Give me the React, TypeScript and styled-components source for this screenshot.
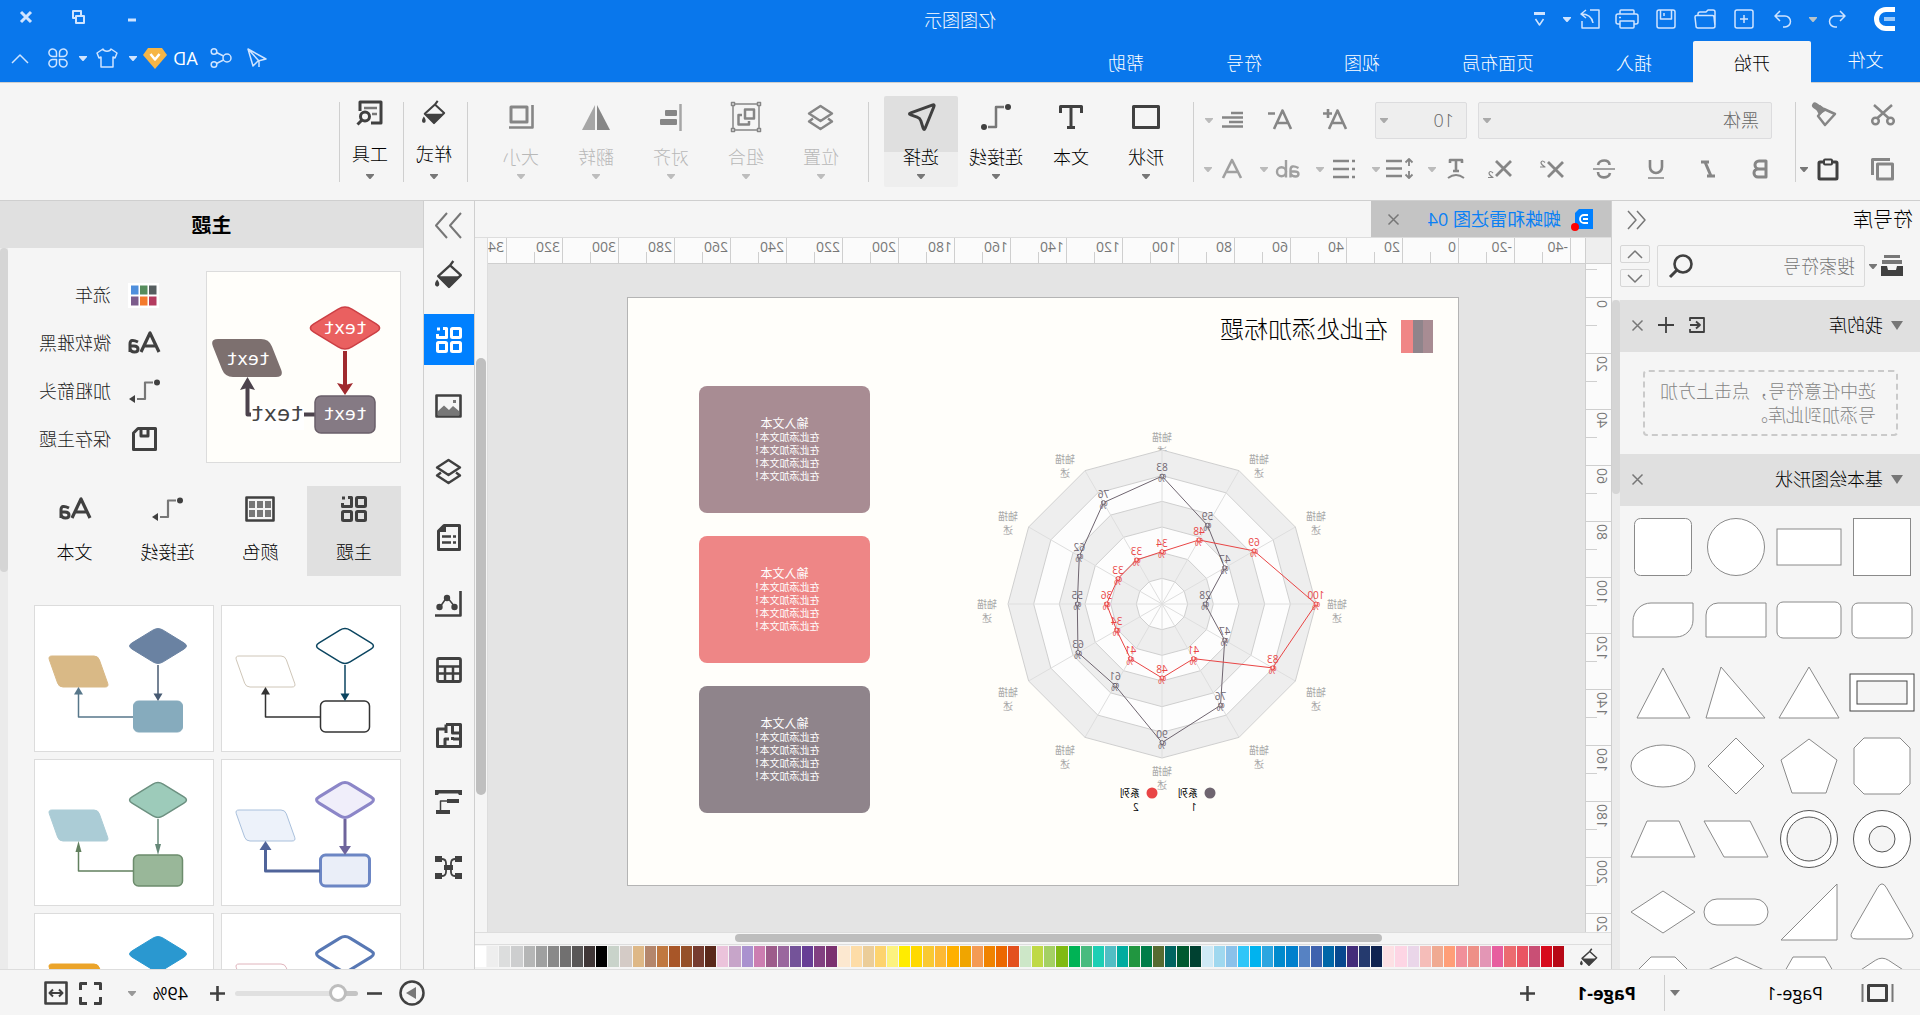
import React from "react";
import styled, { createGlobalStyle } from "styled-components";

const C = {
  blue: "#0977ec",
  accent: "#0080ff",
  panel: "#f5f5f5",
  head: "#e0e0e0",
  line: "#cfcfcf",
  soft: "#dddddd",
  dark: "#404040",
  mid: "#777777",
  off: "#868686",
  canvas: "#e4e4e4",
  paper: "#fffefa",
};

const sans = `"Open Sans", "Noto Sans CJK SC", "Noto Sans", sans-serif`;

const GlobalStyle = createGlobalStyle`
  * { box-sizing: border-box; }
  body { margin: 0; background: ${C.panel}; }
  button, input, select { font: inherit; color: inherit; }
  button { border: 0; padding: 0; margin: 0; background: transparent; }
  h2, h3, p { margin: 0; font: inherit; }
`;

const Window = styled.div`
  display: flex;
  flex-direction: column;
  height: 100vh;
  overflow: hidden;
  background: ${C.panel};
  color: #000;
  font-family: ${sans};
  font-size: 18px;
  font-weight: 300;
  line-height: 24px;
  transform: scaleX(-1);
`;

/* ---------- icon helpers ---------- */

const Svg = styled.svg<{ $c?: string; $sw?: number }>`
  display: block;
  flex: none;
  color: ${(p) => p.$c || C.dark};
  fill: none;
  stroke: currentColor;
  stroke-width: ${(p) => p.$sw || 2};
  stroke-linejoin: round;
  overflow: visible;
  .f { fill: currentColor; stroke: none; }
  .m { stroke: ${C.mid}; }
  .mf { fill: ${C.mid}; stroke: none; }
`;

type IconProps = { s?: number; w?: number; c?: string; sw?: number; children: React.ReactNode };
const Icon = ({ s = 24, w, c, sw, children }: IconProps) => (
  <Svg $c={c} $sw={sw} width={w || s} height={s} viewBox={`0 0 ${w || s} ${s}`} aria-hidden="true">
    {children}
  </Svg>
);

const Caret = ({ c = C.mid }: { c?: string }) => (
  <Icon s={5} w={8} c={c}>
    <path className="f" d="M0 0H8V1L4.500 5H3.500L0 1z" />
  </Icon>
);

type Pt = [number, number];
const roundPoly = (pts: Pt[], r: number) => {
  const n = pts.length;
  return (
    pts
      .map((p, i) => {
        const a = pts[(i + n - 1) % n];
        const b = pts[(i + 1) % n];
        const toward = (q: Pt) => {
          const d = Math.hypot(q[0] - p[0], q[1] - p[1]);
          return `${p[0] + ((q[0] - p[0]) * r) / d} ${p[1] + ((q[1] - p[1]) * r) / d}`;
        };
        return `${i ? "L" : "M"}${toward(a)}Q${p[0]} ${p[1]} ${toward(b)}`;
      })
      .join("") + "Z"
  );
};

/* ---------- header ---------- */

const Header = styled.header`
  flex: none;
  background: ${C.blue};
  color: #fff;
  border-bottom: 1px solid ${C.line};
`;

const TitleRow = styled.div`
  display: grid;
  grid-template-columns: 1fr auto 1fr;
  height: 41px;
`;

const QuickBar = styled.div`
  display: flex;
  align-items: center;
  height: 38px;
  padding-left: 25px;
`;

const Slot = styled.button<{ $w: number; $gap?: number }>`
  display: flex;
  align-items: center;
  justify-content: center;
  flex: none;
  width: ${(p) => p.$w}px;
  height: 32px;
  margin-left: ${(p) => p.$gap || 0}px;
`;

const Account = styled(Slot)`
  font-weight: 400;
`;

const AppTitle = styled.div`
  padding-top: 8px;
`;

const WindowButtons = styled.div`
  display: flex;
  justify-content: flex-end;
  align-items: center;
  height: 34px;
`;

const MenuRow = styled.div`
  display: flex;
  height: 41px;
`;

const FileTab = styled.button`
  width: 109px;
  height: 38px;
`;

const MenuTab = styled.button<{ $on?: boolean }>`
  padding: 2px 41px 0;
  height: 41px;
  border-radius: 2px 2px 0 0;
  background: ${(p) => (p.$on ? C.panel : "transparent")};
  color: ${(p) => (p.$on ? "#000" : "#fff")};
  box-shadow: ${(p) => (p.$on ? `0 1px 0 ${C.panel}` : "none")};
`;

const MenuActions = styled.div`
  display: flex;
  align-items: center;
  height: 34px;
  margin-left: auto;
`;

const LT = "#cfe4ff";

const Head = () => (
  <Header>
    <TitleRow>
      <QuickBar>
        <Icon s={24} c="#fff" sw={5}>
          <path d="M0 2.500H9a9.500 9.500 0 0 1 0 19H0" />
          <path d="M0 12H11" stroke="#9dcaf9" strokeWidth="4" />
        </Icon>
        <Slot $w={28} $gap={20} aria-label="撤销">
          <Icon s={18} c={LT} sw={1.5}><path d="M6 1L1 6L6 11M1 6H11a5.500 5.500 0 0 1 0 11H9" /></Icon>
        </Slot>
        <Slot $w={20} aria-label="撤销记录"><Caret c="#b9c4c9" /></Slot>
        <Slot $w={39} aria-label="重做">
          <Icon s={18} c={LT} sw={1.5}><path d="M12 1L17 6L12 11M17 6H7a5.500 5.500 0 0 0 0 11H9" /></Icon>
        </Slot>
        <Slot $w={39} aria-label="新建">
          <Icon s={20} c={LT} sw={1.5}><rect x="1" y="1" width="18" height="18" rx="2" /><path d="M10 6V14M6 10H14" /></Icon>
        </Slot>
        <Slot $w={39} aria-label="打开">
          <Icon s={20} w={22} c={LT} sw={1.5}><path d="M1 16V3a2 2 0 0 1 2-2H8L10 3H16a2 2 0 0 1 2 2V7M1 17L2 8a1.500 1.500 0 0 1 1.500-1.500H19.500A1.500 1.500 0 0 1 21 8L20 17a2 2 0 0 1-2 2H3a2 2 0 0 1-2-2" /></Icon>
        </Slot>
        <Slot $w={39} aria-label="保存">
          <Icon s={20} c={LT} sw={1.5}><rect x="1" y="1" width="18" height="18" rx="2" /><path d="M4.500 1V10H15.500V1M12 4V7" /></Icon>
        </Slot>
        <Slot $w={39} aria-label="打印">
          <Icon s={20} w={24} c={LT} sw={1.5}><path d="M5 5V2a1 1 0 0 1 1-1H18a1 1 0 0 1 1 1V5M5 15H3a2 2 0 0 1-2-2V7a2 2 0 0 1 2-2H21a2 2 0 0 1 2 2V13a2 2 0 0 1-2 2H19M5 12H19V18a1 1 0 0 1-1 1H6a1 1 0 0 1-1-1zM18 8.500H20" /></Icon>
        </Slot>
        <Slot $w={36} aria-label="导出">
          <Icon s={20} c={LT} sw={1.5}><path d="M10 1H1V19H18V12M14 1L19 5L14 9M19 5C12 5 8 8 7 14" /></Icon>
        </Slot>
        <Slot $w={10} aria-label="导出选项"><Caret c={LT} /></Slot>
        <Slot $w={24} $gap={10} aria-label="自定义快速访问">
          <Icon s={15} w={11} c={LT} sw={1.5}><path className="f" d="M0 0H11V3H0z" /><path d="M1.500 7L5.500 13L9.500 7" /></Icon>
        </Slot>
      </QuickBar>
      <AppTitle>亿图图示</AppTitle>
      <WindowButtons>
        <Slot $w={52} aria-label="最小化"><Icon s={12} w={10} c={LT} sw={3}><path d="M1 9H9" /></Icon></Slot>
        <Slot $w={54} aria-label="还原"><Icon s={14} w={13} c={LT} sw={2}><rect x="1" y="6" width="8" height="7" /><path d="M4 6V1H12V8H9" /></Icon></Slot>
        <Slot $w={52} aria-label="关闭"><Icon s={12} c={LT} sw={3}><path d="M1 1L11 11M11 1L1 11" /></Icon></Slot>
      </WindowButtons>
    </TitleRow>
    <MenuRow>
      <FileTab>文件</FileTab>
      <MenuTab $on>开始</MenuTab>
      <MenuTab>插入</MenuTab>
      <MenuTab>页面布局</MenuTab>
      <MenuTab>视图</MenuTab>
      <MenuTab>符号</MenuTab>
      <MenuTab>帮助</MenuTab>
      <MenuActions>
        <Slot $w={36} aria-label="发送"><Icon s={20} c={LT} sw={1.5}><path d="M19 1L14 18L9 13L1 11zM19 1L8 13V19" /></Icon></Slot>
        <Slot $w={36} aria-label="分享"><Icon s={20} w={22} c={LT} sw={1.5}><circle cx="5" cy="10" r="4" /><circle cx="18" cy="3.500" r="2.800" /><circle cx="18" cy="16.500" r="2.800" /><path d="M8.500 8L15.500 4.500M8.500 12L15.500 15.500" /></Icon></Slot>
        <Account $w={35}>AD</Account>
        <Slot $w={26} aria-label="会员">
          <Icon s={21} w={24}><path fill="#f6b545" stroke="none" d="M5 0H19L24 7L12 21L0 7z" /><path d="M7.500 6L12 11.500L16.500 6" stroke="#fff" strokeWidth="2.500" /></Icon>
        </Slot>
        <Slot $w={18} aria-label="会员选项"><Caret c={LT} /></Slot>
        <Slot $w={34} aria-label="皮肤"><Icon s={20} w={22} c={LT} sw={1.5}><path d="M7 1C8 4 14 4 15 1L21 5L19 10L17 9V19H5V9L3 10L1 5z" /></Icon></Slot>
        <Slot $w={14} aria-label="皮肤选项"><Caret c={LT} /></Slot>
        <Slot $w={36} aria-label="应用">
          <Icon s={20} c={LT} sw={1.5}><path d="M8.500 8.500H5A3.800 3.800 0 1 1 8.500 5zM11.500 8.500H15A3.800 3.800 0 1 0 11.500 5zM8.500 11.500H5A3.800 3.800 0 1 0 8.500 15zM11.500 11.500H15A3.800 3.800 0 1 1 11.500 15z" /></Icon>
        </Slot>
        <Slot $w={40} aria-label="收起功能区"><Icon s={9} w={16} c={LT} sw={1.5}><path d="M0 9L8 1L16 9" /></Icon></Slot>
      </MenuActions>
    </MenuRow>
  </Header>
);

/* ---------- ribbon ---------- */

const Ribbon = styled.div`
  display: flex;
  flex: none;
  height: 118px;
  border-bottom: 1px solid ${C.line};
`;

const Rule = styled.div<{ $l?: number }>`
  flex: none;
  width: 1px;
  height: 80px;
  margin: 19px 0 0 ${(p) => p.$l || 0}px;
  background: ${C.line};
`;

const Clipboard = styled.div`
  display: grid;
  grid-template: 54px 54px / 60px 57px;
  place-items: center;
  padding: 5px 0 0 7px;
`;

const FontGroup = styled.div`
  display: flex;
  flex-direction: column;
  gap: 13px;
  padding: 19px 0 0 9px;
`;

const ToolLine = styled.div<{ $pad?: number }>`
  display: flex;
  align-items: center;
  height: 36px;
  padding-left: ${(p) => p.$pad || 0}px;
`;

const Field = styled.div<{ $w: number; $gap?: number }>`
  display: flex;
  align-items: center;
  flex: none;
  width: ${(p) => p.$w}px;
  height: 37px;
  padding-right: 4px;
  margin-left: ${(p) => p.$gap || 0}px;
  border: 1px solid #dcdcde;
  border-radius: 2px;
  background: #eeeeee;
`;

const Select = styled.select`
  flex: 1;
  min-width: 0;
  height: 35px;
  padding: 0 0 0 12px;
  border: 0;
  background: transparent;
  color: #666;
  appearance: none;
`;

const PairButton = styled.button<{ $gap?: number }>`
  display: grid;
  grid-template-columns: 24px 8px;
  column-gap: 8px;
  place-items: center;
  flex: none;
  height: 34px;
  margin-left: ${(p) => p.$gap || 0}px;
`;

const BigGroup = styled.div<{ $l?: number }>`
  display: flex;
  gap: 1px;
  padding: 13px 0 0 ${(p) => p.$l || 0}px;
`;

const Big = styled.button<{ $on?: boolean; $off?: boolean; $w?: number; $up?: boolean }>`
  display: flex;
  flex-direction: column;
  align-items: center;
  width: ${(p) => p.$w || 74}px;
  height: 91px;
  padding: ${(p) => (p.$up ? "2px 0 0 3px" : "7px 0 0")};
  border-radius: 2px;
  background: ${(p) => (p.$on ? "linear-gradient(#dfdfdf 56px, #eeeeee 56px)" : "transparent")};
  color: ${(p) => (p.$off ? "#b8b8b8" : "#000")};
`;

const BigIcon = styled.span`
  display: flex;
  align-items: center;
  justify-content: center;
  height: 28px;
`;

const BigLabel = styled.span<{ $up?: boolean }>`
  padding: ${(p) => (p.$up ? "16px 0 8px" : "14px 0 5px")};
`;

const BigTool = ({ name, on, off, up, w, children }: { name: string; on?: boolean; off?: boolean; up?: boolean; w?: number; children: React.ReactNode }) => (
  <Big $on={on} $off={off} $up={up} $w={w} disabled={off}>
    <BigIcon>{children}</BigIcon>
    <BigLabel $up={up}>{name}</BigLabel>
    {name === "文本" ? null : <Caret c={off ? "#bdbdbd" : C.mid} />}
  </Big>
);

const Bucket = ({ s = 26, c = C.dark }: { s?: number; c?: string }) => (
  <Svg $c={c} width={s} height={s} viewBox="0 0 26 26" aria-hidden="true">
    <path d="M12 5L23 15L13 25L2 14zM12 5L9 1" strokeWidth="2.200" />
    <path className="f" d="M3 15H23L13 25.500z" />
    <path className="f" d="M24 18q3 4 1.500 6q-1.500 1.500-3 0q-1.500-2 1.500-6z" />
  </Svg>
);

const LayersIcon = ({ c, s = 27 }: { c?: string; s?: number }) => (
  <Svg $c={c} $sw={2.4} width={s} height={s} viewBox="0 0 27 27" aria-hidden="true">
    <path d="M13.500 2L25 9.500L13.500 17L2 9.500zM6 14.500L2 17.500L13.500 25L25 17.500L21 14.500" />
  </Svg>
);

const Toolbar = () => (
  <Ribbon>
    <Clipboard>
      <button aria-label="剪切">
        <Icon s={22} w={24} c={C.off} sw={2.5}><circle cx="4.500" cy="17" r="3.300" /><circle cx="19.500" cy="17" r="3.300" /><path d="M6.500 14L21 1M17.500 14L3 1" /></Icon>
      </button>
      <button aria-label="格式刷">
        <Icon s={24} w={25} c={C.off} sw={2.5}><path d="M2 11L13 6L19 13L12 22z" /><path className="f" d="M10 7L17 2L21 6L18 12z" /><path d="M17 6L22 2.500" strokeWidth="6" strokeLinecap="round" /></Icon>
      </button>
      <button aria-label="复制">
        <Icon s={22} w={23} c={C.off} sw={3}><rect x="1.500" y="6" width="15" height="15" /><path d="M4 1.500H21.500V17" /></Icon>
      </button>
      <PairButton $gap={8} aria-label="粘贴">
        <Icon s={23} w={22} sw={3}><rect x="2" y="4" width="18" height="17" rx="1" /><rect x="7" y="1.500" width="8" height="5" rx="1" fill={C.panel} strokeWidth="2" /></Icon>
        <Caret />
      </PairButton>
    </Clipboard>
    <Rule />
    <FontGroup>
      <ToolLine $pad={14}>
        <Field $w={294}>
          <Select aria-label="字体"><option>黑体</option></Select>
          <Caret c="#aaa" />
        </Field>
        <Field $w={92} $gap={11}>
          <Select aria-label="字号"><option>10</option></Select>
          <Caret c="#aaa" />
        </Field>
        <Slot $w={55} $gap={12} aria-label="增大字号">
          <Icon s={22} w={24} c={C.off} sw={2.6}><path d="M1 20L9.500 1.500L18 20M4.500 14H14.500M19 0V9M15 4.500H24" /></Icon>
        </Slot>
        <Slot $w={55} aria-label="减小字号">
          <Icon s={22} w={24} c={C.off} sw={2.6}><path d="M1 20L9.500 1.500L18 20M4.500 14H14.500M17 4.500H24" /></Icon>
        </Slot>
        <PairButton $gap={8} aria-label="对齐">
          <Icon s={18} w={22} c={C.off} sw={2.5}><path d="M1 2H13M1 6.500H22M1 11H15M1 15.500H22" /></Icon>
          <Caret c="#bbb" />
        </PairButton>
      </ToolLine>
      <ToolLine>
        <Slot $w={52} aria-label="加粗"><Icon s={20} w={16} c={C.off} sw={3}><path d="M2 2H9a4 4 0 0 1 0 8H2zM9 10h1a4 4 0 0 1 0 8H2V10" /></Icon></Slot>
        <Slot $w={52} aria-label="倾斜"><Icon s={18} w={16} c={C.off} sw={3}><path d="M7 2H15M11 2L5 16M1 16H9" /></Icon></Slot>
        <Slot $w={52} aria-label="下划线"><Icon s={20} w={16} c={C.off} sw={2.6}><path d="M2 1V8a6 6 0 0 0 12 0V1" /><path d="M0 19H16" strokeWidth="1.500" /></Icon></Slot>
        <Slot $w={52} aria-label="删除线"><Icon s={20} w={22} c={C.off} sw={2.6}><path d="M17 6C16 0 5 0 5.500 6M5 14C6 20 17 20 17 13" /><path d="M0 10H22" strokeWidth="1.500" /></Icon></Slot>
        <Slot $w={52} aria-label="上标"><Icon s={18} w={24} c={C.off} sw={2.8}><path d="M1 2L16 17M16 2L1 17" /><path d="M19 2.500q3-3 4 0q0 2-4 4.500H24" strokeWidth="1.200" /></Icon></Slot>
        <Slot $w={52} aria-label="下标"><Icon s={18} w={24} c={C.off} sw={2.8}><path d="M1 1L16 16M16 1L1 16" /><path d="M19 13q3-3 4 0q0 2-4 4.500H24" strokeWidth="1.200" /></Icon></Slot>
        <PairButton $gap={6} aria-label="文字方向">
          <Icon s={22} w={18} c={C.off} sw={2.6}><path d="M3 5V2H15V5M9 2V13M6 13H12" /><path d="M1 20Q9 14 17 20" strokeWidth="2" /></Icon>
          <Caret c="#bbb" />
        </PairButton>
        <PairButton $gap={16} aria-label="行距">
          <Icon s={22} w={27} c={C.off} sw={2.6}><path d="M11 3H27M11 10.500H27M11 18H27" /><path d="M4 1V8M4 13V20M0.500 4.500L4 1L7.500 4.500M0.500 16.500L4 20L7.500 16.500" strokeWidth="1.800" /></Icon>
          <Caret c="#bbb" />
        </PairButton>
        <PairButton $gap={16} aria-label="项目符号">
          <Icon s={20} w={22} c={C.off} sw={2.6}><path d="M0 2H3M6 2H22M0 10H3M6 10H22M0 18H3M6 18H22" /></Icon>
          <Caret c="#bbb" />
        </PairButton>
        <PairButton $gap={16} aria-label="大小写">
          <Icon s={18} w={24} c="#a0a0a0" sw={2.4}><path d="M1.500 8Q9.500 4 9.500 10V17.500M9.500 11.500H5.500q-4 0-4 2.500t3 2.500q3.500 0 5-3" /><path d="M14 0V17.500" /><circle cx="18.500" cy="11.800" r="4.500" /></Icon>
          <Caret c="#bbb" />
        </PairButton>
        <PairButton $gap={16} aria-label="字体颜色">
          <Icon s={20} w={20} c="#a0a0a0" sw={2.6}><path d="M1 19L10 1L19 19M5 13H15" /></Icon>
          <Caret c="#bbb" />
        </PairButton>
      </ToolLine>
    </FontGroup>
    <Rule $l={10} />
    <BigGroup $l={10}>
      <BigTool name="形状"><Icon s={24} w={28} sw={3}><rect x="1.500" y="1.500" width="25" height="21" /></Icon></BigTool>
      <BigTool name="文本"><Icon s={24} sw={3}><path d="M1.500 8V1.500H22.500V8M8 22.500H16" /><path d="M12 2V22" /></Icon></BigTool>
      <BigTool name="连接线"><Icon s={26} w={30}><circle className="f" cx="3" cy="3" r="3" /><circle className="f" cx="27" cy="23" r="3" /><path className="m" d="M7 3H15V23H23" strokeWidth="2.500" /></Icon></BigTool>
      <BigTool name="选择" on><Icon s={28} sw={3}><path d={roundPoly([[0, 1], [27, 11], [15, 15], [11, 28]], 3)} /></Icon></BigTool>
    </BigGroup>
    <Rule $l={15} />
    <BigGroup $l={10}>
      <BigTool name="位置" off><LayersIcon c={C.off} /></BigTool>
      <BigTool name="组合" off>
        <Icon s={30} c={C.off} sw={1.5}><rect x="2" y="2" width="26" height="26" /><path d="M7 7.500H16V16.500H7zM19 13H22.500V22.500H12V19" strokeWidth="2.500" /><g fill={C.panel}><rect x="0.500" y="0.500" width="3" height="3" /><rect x="26.500" y="0.500" width="3" height="3" /><rect x="0.500" y="26.500" width="3" height="3" /><rect x="26.500" y="26.500" width="3" height="3" /></g></Icon>
      </BigTool>
      <BigTool name="对齐" off><Icon s={27} w={22} c={C.off}><path d="M1.500 0V27" stroke="#a6a6a6" strokeWidth="2.500" /><rect className="f" x="5" y="6" width="12" height="6" rx="1" /><rect className="f" x="5" y="15" width="17" height="6" rx="1" /></Icon></BigTool>
      <BigTool name="翻转" off><Icon s={25} w={28} c={C.off}><path className="f" d="M13 0V25H0z" /><path fill="#a6a6a6" stroke="none" d="M15 0V25H28z" /></Icon></BigTool>
      <BigTool name="大小" off><Icon s={24} w={26} c={C.off} sw={2.6}><rect x="7" y="2" width="16" height="15" strokeWidth="3" /><path d="M1.500 0V22.500H25" /></Icon></BigTool>
    </BigGroup>
    <Rule $l={16} />
    <BigGroup><BigTool name="样式" up w={63}><Bucket s={24} /></BigTool></BigGroup>
    <Rule />
    <BigGroup>
      <BigTool name="工具" up w={63}>
        <Icon s={25} w={27} sw={3}><path d="M12 23H2V2H23V11" /><path className="m" d="M6 8H19M6 14H11" strokeWidth="2.500" /><circle cx="18" cy="16.500" r="4.500" /><path d="M21 20L25.500 24.500" /></Icon>
      </BigTool>
    </BigGroup>
    <Rule />
  </Ribbon>
);

/* ---------- symbol library ---------- */

const Body = styled.div`
  display: flex;
  flex: 1;
  min-height: 0;
`;

const Library = styled.aside`
  display: flex;
  flex-direction: column;
  flex: none;
  width: 309px;
  border-right: 1px solid ${C.line};
`;

const LibraryHead = styled.div`
  display: flex;
  align-items: center;
  justify-content: space-between;
  height: 38px;
  padding: 0 16px 0 7px;
  font-size: 20px;
`;

const SearchRow = styled.div`
  display: flex;
  flex: none;
  height: 61px;
  padding: 6px 8px 12px 17px;
`;

const LibraryMenu = styled.button`
  display: flex;
  align-items: center;
  gap: 4px;
  height: 42px;
`;

const SearchBox = styled.label`
  display: flex;
  align-items: center;
  flex: 1;
  min-width: 0;
  height: 42px;
  margin: 0 7px 0 4px;
  padding-right: 11px;
  border: 1px solid #dadada;
  border-radius: 2px;
`;

const SearchInput = styled.input`
  flex: 1;
  min-width: 0;
  padding: 0 0 0 9px;
  border: 0;
  outline: 0;
  background: transparent;
  &::placeholder { color: #777; opacity: 1; }
`;

const Steps = styled.div`
  display: grid;
  flex: none;
  gap: 6px;
  width: 30px;
  height: 42px;
`;

const Step = styled.button`
  display: grid;
  place-items: center;
  border: 1px solid #d6d6d6;
  border-radius: 2px;
`;

const ScrollArea = styled.div`
  display: flex;
  flex: 1;
  min-height: 0;
`;

const ScrollBody = styled.div`
  flex: 1;
  min-width: 0;
  overflow: hidden;
`;

const Track = styled.div`
  flex: none;
  width: 8px;
  background: #ebebeb;
`;

const Thumb = styled.div<{ $share: number }>`
  height: ${(p) => p.$share}%;
  border-radius: 4px;
  background: #d5d5d5;
`;

const SectionHead = styled.div`
  display: flex;
  align-items: center;
  gap: 15px;
  height: 52px;
  padding: 0 12px 2px 17px;
  background: ${C.head};
`;

const SectionTitle = styled.h3`
  display: flex;
  align-items: center;
  gap: 8px;
  flex: 1;
  color: #000;
`;

const DropHint = styled.p`
  margin: 18px 23px 18px 22px;
  padding: 7px 12px 7px 20px;
  border: 2px dashed #cacaca;
  border-radius: 4px;
  color: #858585;
`;

const ShapeGrid = styled.div`
  display: grid;
  grid-template-columns: repeat(4, 73px);
  grid-auto-rows: 73px;
  padding: 5px 0 0 2px;
`;

const ShapeSvg = styled.svg`
  display: block;
  overflow: visible;
  fill: #fff;
  stroke: #8a8a8a;
  stroke-width: 1;
  .hole { fill: ${C.panel}; }
`;

const poly = (...p: Pt[]) => <polygon points={p.map((q) => q.join(",")).join(" ")} />;

const shapes: React.ReactNode[] = [
  <rect x="-28.500" y="-28.500" width="57" height="57" />,
  <rect x="-32" y="-18" width="64" height="36" />,
  <circle r="28.500" />,
  <rect x="-28.500" y="-28.500" width="57" height="57" rx="6" />,
  <rect x="-30" y="-17" width="60" height="35" rx="6" />,
  <rect x="-32" y="-18" width="64" height="36" rx="6" />,
  <path d="M-30-17H18a12 12 0 0 1 12 12V17H-30z" />,
  <path d="M-30-17H12a18 18 0 0 1 18 18V17H-13a17 17 0 0 1-17-17z" />,
  <g stroke="#444"><rect x="-32" y="-19" width="64" height="37" /><rect className="hole" x="-25" y="-12" width="50" height="23" /></g>,
  poly([0, -26], [30, 25], [-30, 25]),
  poly([15, -26], [30, 25], [-29, 25]),
  poly([0, -25], [26, 25], [-27, 25]),
  poly([-18, -28], [18, -28], [28, -18], [28, 18], [18, 28], [-18, 28], [-28, 18], [-28, -18]),
  poly([0, -27], [28, -6], [17, 27], [-17, 27], [-28, -6]),
  poly([0, -28], [28, 0], [0, 28], [-28, 0]),
  <ellipse rx="32" ry="21" />,
  <g stroke="#555"><circle r="28.500" /><circle className="hole" r="13" /></g>,
  <g stroke="#555"><circle r="28.500" /><circle className="hole" r="22" /></g>,
  poly([-14, -18], [32, -18], [12, 18], [-32, 18]),
  poly([-16, -18], [16, -18], [32, 18], [-32, 18]),
  <path d={roundPoly([[0, -32], [34, 27], [-34, 27]], 9)} />,
  poly([-28, -28], [28, 28], [-28, 28]),
  <rect x="-32" y="-13" width="64" height="26" rx="13" />,
  poly([0, -21], [32, 0], [0, 21], [-32, 0]),
  <path d={roundPoly([[0, -29], [32, -8], [20, 26], [-20, 26], [-32, -8]], 8)} />,
  poly([-16, -28], [16, -28], [32, 0], [16, 28], [-16, 28], [-32, 0]),
  poly([0, -28], [28, -15], [30, 10], [12, 28], [-12, 28], [-30, 10], [-28, -15]),
  poly([-12, -28], [12, -28], [30, -10], [30, 12], [12, 28], [-12, 28], [-30, 12], [-30, -10]),
];

const Tri = () => <Icon s={9} w={12}><path className="mf" d="M0 0H12L6 9z" /></Icon>;
const Cross = () => <Icon s={11} c="#777" sw={1.5}><path d="M0.500 0.500L10.500 10.500M10.500 0.500L0.500 10.500" /></Icon>;

const SymbolLibrary = () => (
  <Library>
    <LibraryHead>
      <h2>符号库</h2>
      <button aria-label="收起符号库"><Icon s={18} c={C.mid} sw={1.5}><path d="M9 0L1 9L9 18M18 0L10 9L18 18" /></Icon></button>
    </LibraryHead>
    <SearchRow>
      <LibraryMenu aria-label="符号库菜单">
        <Icon s={22}><path className="mf" d="M3 0H19V3H3zM1 5H21V9H1z" /><path className="f" d="M0 11H6L7 15H15L16 11H22V21H0z" /></Icon>
        <Caret />
      </LibraryMenu>
      <SearchBox>
        <SearchInput aria-label="搜索符号" placeholder="搜索符号" />
        <Icon s={24} sw={2.6}><circle cx="10" cy="10" r="8.500" /><path d="M16 16L23 23" strokeWidth="3" /></Icon>
      </SearchBox>
      <Steps>
        <Step aria-label="上一个"><Icon s={7} w={14} c={C.mid} sw={1.5}><path d="M0 7L7 0L14 7" /></Icon></Step>
        <Step aria-label="下一个"><Icon s={7} w={14} c={C.mid} sw={1.5}><path d="M0 0L7 7L14 0" /></Icon></Step>
      </Steps>
    </SearchRow>
    <ScrollArea>
      <ScrollBody>
        <SectionHead>
          <SectionTitle><Tri />我的库</SectionTitle>
          <button aria-label="导入"><Icon s={16} sw={1.8}><path d="M15 4V1H1V15H15V12M15 8H5M9 4.500L5 8L9 11.500" /></Icon></button>
          <button aria-label="添加"><Icon s={16} sw={1.8}><path d="M8 0V16M0 8H16" /></Icon></button>
          <button aria-label="关闭我的库"><Cross /></button>
        </SectionHead>
        <DropHint>选中任意符号，点击上方加号添加到此库。</DropHint>
        <SectionHead>
          <SectionTitle><Tri />基本绘图形状</SectionTitle>
          <button aria-label="关闭基本绘图形状"><Cross /></button>
        </SectionHead>
        <ShapeGrid>
          {shapes.map((s, i) => (
            <ShapeSvg key={i} width="73" height="73" viewBox="-36 -36 73 73" aria-hidden="true">{s}</ShapeSvg>
          ))}
        </ShapeGrid>
      </ScrollBody>
      <Track><Thumb $share={29} /></Track>
    </ScrollArea>
  </Library>
);

/* ---------- document area ---------- */

const Stage = styled.main`
  display: flex;
  flex-direction: column;
  flex: 1;
  min-width: 0;
`;

const DocTabs = styled.div`
  flex: none;
  height: 37px;
  border-bottom: 1px solid ${C.soft};
`;

const DocTab = styled.div`
  display: flex;
  align-items: center;
  width: 240px;
  height: 36px;
  padding: 0 17px 0 18px;
  background: #c4c4c4;
  color: #0a80f5;
`;

const DocName = styled.span`
  flex: 1;
  padding-left: 10px;
  font-weight: 400;
  white-space: nowrap;
`;

const Desk = styled.div`
  display: grid;
  grid-template: 26px 1fr / 26px 1fr 13px;
  flex: 1;
  min-height: 0;
  font-size: 14px;
  font-weight: 400;
  color: #777;
`;

const Corner = styled.div`
  background: #eeeeee;
  border-right: 1px solid ${C.line};
  border-bottom: 1px solid ${C.line};
`;

const RulerX = styled.div`
  display: flex;
  overflow: hidden;
  padding-left: 14px;
  background: #fbfbfb;
  border-bottom: 1px solid ${C.line};
`;

const TickX = styled.span`
  flex: none;
  width: 56px;
  padding-left: 2px;
  border-left: 1px solid ${C.line};
  line-height: 18px;
  background: linear-gradient(${C.line}, ${C.line}) 27px 100% / 1px 11px no-repeat;
`;

const RulerY = styled.div`
  min-height: 0;
  overflow: hidden;
  background: #fbfbfb;
  border-right: 1px solid ${C.line};
`;

const TickYLead = styled.div`
  height: 33px;
  background: linear-gradient(${C.line}, ${C.line}) 100% 5px / 11px 1px no-repeat;
`;

const TickY = styled.div`
  height: 56px;
  border-top: 1px solid ${C.line};
  background: linear-gradient(${C.line}, ${C.line}) 100% 27px / 11px 1px no-repeat;
`;

const TickYText = styled.span`
  display: block;
  width: 18px;
  padding-bottom: 2px;
  line-height: 18px;
  writing-mode: vertical-rl;
  transform: rotate(180deg);
`;

const ScrollY = styled.div`
  grid-row: 1 / 3;
  grid-column: 3;
  display: grid;
  grid-template-rows: 120fr 437fr 137fr;
  padding: 0 1px;
  border-left: 1px solid ${C.soft};
`;

const ScrollYThumb = styled.div`
  grid-row: 2;
  border-radius: 5px;
  background: #bfbfbf;
`;

const Canvas = styled.div`
  position: relative;
  overflow: hidden;
  background: ${C.canvas};
`;

const Paper = styled.div`
  position: absolute;
  left: 126px;
  top: 33px;
  width: 832px;
  height: 589px;
  border: 1px solid #b4b4b4;
  background: ${C.paper};
  color: #000;
`;

const PaperTitle = styled.div`
  position: absolute;
  left: 25px;
  top: 14px;
  display: flex;
  gap: 13px;
  font-size: 24px;
  font-weight: 300;
  line-height: 34px;
`;

const Stripes = styled.span`
  width: 32px;
  height: 33px;
  margin-top: 8px;
  background: linear-gradient(90deg, #a88c93 10px, #8f848b 10px 20px, #f08686 20px);
`;

const CardColumn = styled.div`
  position: absolute;
  left: 588px;
  top: 88px;
  display: grid;
  gap: 23px;
`;

const TextCard = styled.div<{ $bg: string }>`
  display: flex;
  flex-direction: column;
  justify-content: center;
  width: 171px;
  height: 127px;
  border-radius: 8px;
  background: ${(p) => p.$bg};
  color: #fff;
  font-size: 10px;
  line-height: 13px;
  text-align: center;
`;

const CardTitle = styled.span`
  font-size: 12px;
  line-height: 14px;
`;

const ChartSvg = styled.svg`
  position: absolute;
  left: 96px;
  top: 106px;
  font-family: ${sans};
  font-size: 10px;
  text-anchor: middle;
`;

const R = 154;
const at = (i: number, r: number): Pt => {
  const a = (i * Math.PI) / 6;
  return [Math.sin(a) * r, -Math.cos(a) * r];
};
const ring = (r: number) => Array.from({ length: 12 }, (_, i) => at(i, r).join(",")).join(" ");
const series = [
  { name: "系列", n: "1", color: "#6f6570", x: -48, v: [83, 76, 62, 55, 63, 61, 90, 76, 47, 28, 47, 59] },
  { name: "系列", n: "2", color: "#e94545", x: 10, v: [34, 33, 33, 36, 34, 41, 48, 41, 83, 100, 69, 48] },
];
const axisLabels: Pt[] = [
  [0, -166], [97, -144], [154, -87], [175, 1], [154, 89], [97, 147],
  [0, 168], [-97, 147], [-154, 89], [-175, 1], [-154, -87], [-97, -144],
];

const Radar = () => (
  <ChartSvg width="400" height="420" viewBox="-200 -200 400 420" role="img" aria-label="雷达图">
    <g fill="#a8a8a8">
      {axisLabels.map(([x, y], i) => (
        <g key={i}>
          <text x={x} y={y + 3}>轴描</text>
          <text x={x} y={y + 17}>述</text>
        </g>
      ))}
    </g>
    {[6, 5, 4, 3, 2, 1].map((k) => (
      <polygon key={k} points={ring((R * k) / 6)} fill={k % 2 ? "#fdfdfd" : "#eeeeee"} stroke="#cfcfcf" />
    ))}
    {series[0].v.map((_, i) => {
      const [x, y] = at(i, R);
      return <line key={i} x1="0" y1="0" x2={x} y2={y} stroke="#dedede" />;
    })}
    {series.map((s) => (
      <g key={s.n}>
        <polygon points={s.v.map((v, i) => at(i, (R * v) / 100).join(",")).join(" ")} fill="none" stroke={s.color} />
        {s.v.map((v, i) => {
          const [x, y] = at(i, (R * v) / 100);
          return (
            <g key={i} fill={s.color}>
              <circle cx={x} cy={y} r="2" fill="#fff" stroke={s.color} />
              <text x={x} y={y - 5}>{v}</text>
              <text x={x} y={y + 6}>%</text>
            </g>
          );
        })}
        <circle cx={s.x} cy="189" r="5.500" fill={s.color} />
        <text x={s.x + 22} y="193">{s.name}</text>
        <text x={s.x + 16} y="207">{s.n}</text>
      </g>
    ))}
  </ChartSvg>
);

const ScrollX = styled.div`
  display: grid;
  grid-template-columns: 203fr 648fr 247fr 13px;
  flex: none;
  height: 13px;
  padding: 1px 0 2px 26px;
  border: solid ${C.soft};
  border-width: 1px 0;
`;

const ScrollXThumb = styled.div`
  grid-column: 2;
  border-radius: 5px;
  background: #bdbdbd;
`;

const SwatchRow = styled.div`
  display: flex;
  align-items: flex-start;
  flex: none;
  gap: 1px;
  height: 24px;
  padding: 1px 0 0 13px;
`;

const SwatchIcon = styled.button`
  width: 33px;
  padding-top: 2px;
`;

const Swatch = styled.button<{ $c: string }>`
  flex: 1;
  min-width: 0;
  height: 21px;
  background: ${(p) => p.$c};
`;

const palette = (
  "b70816 d70a1c c94f75 ea5463 ec6b70 e75f9f e396b5 ee9087 f18f9a ff9e78 f0aa92 f5bdb9 ead6e9 fdd5e4 fde0e4 " +
  "0f2350 253a6e 432c7a 07488f 0067a8 3f62ae 5682c3 0080cd 008acd 2ca6e0 00b3ef 2fc6f8 8bc1ea 9fd8ef cfeaf6 " +
  "004131 005a30 006561 566b31 007d49 219640 00ac9f 52bec4 1dcfb4 48bb7f 00b355 80ba12 a4d064 bfd945 cde7c8 " +
  "e3501e ec6800 f08300 f49b54 f0a500 ffb000 fdb935 f9c932 ffd900 ffec00 fcf27f fdd36e ebcd99 fddca7 fce8d0 " +
  "7b3170 824081 673e95 745399 9a679e 9d5c8b cc7eb1 aa92cf c7a5c9 ebc3db 5a281a 763c30 955029 a85628 c07840 " +
  "b4866c deb887 d4cbc6 c9d3ca 000000 403737 595757 717070 898989 9fa0a0 b5b6b6 cdcecf dcdddd eeeeee ffffff"
).split(" ");

const Document = () => (
  <Stage>
    <DocTabs>
      <DocTab>
        <Icon s={22} w={22}>
          <path fill={C.accent} stroke="none" d="M0 1H14L18 5V21H0z" />
          <path d="M5 7H9a4 4 0 0 1 0 8H5M5 11H10" stroke="#fff" strokeWidth="1.800" />
          <circle cx="18" cy="19" r="4" fill="#f00" stroke="none" />
        </Icon>
        <DocName>蜘蛛和雷达图 04</DocName>
        <button aria-label="关闭文档"><Cross /></button>
      </DocTab>
    </DocTabs>
    <Desk>
      <Corner />
      <RulerX>
        {Array.from({ length: 20 }, (_, i) => <TickX key={i}>{i * 20 - 40}</TickX>)}
      </RulerX>
      <ScrollY><ScrollYThumb /></ScrollY>
      <RulerY>
        <TickYLead />
        {Array.from({ length: 12 }, (_, i) => <TickY key={i}><TickYText>{i * 20}</TickYText></TickY>)}
      </RulerY>
      <Canvas>
        <Paper>
          <PaperTitle><Stripes />在此处添加标题</PaperTitle>
          <Radar />
          <CardColumn>
            {["#a88c93", "#ee8686", "#8f848b"].map((c) => (
              <TextCard key={c} $bg={c}>
                <CardTitle>输入文本</CardTitle>
                <span>在此添加文本！</span>
                <span>在此添加文本！</span>
                <span>在此添加文本！</span>
                <span>在此添加文本！</span>
              </TextCard>
            ))}
          </CardColumn>
        </Paper>
      </Canvas>
    </Desk>
    <ScrollX><ScrollXThumb /></ScrollX>
    <SwatchRow>
      <SwatchIcon aria-label="填充颜色"><Bucket s={18} /></SwatchIcon>
      {palette.map((c) => <Swatch key={c} $c={`#${c}`} aria-label={`#${c}`} />)}
    </SwatchRow>
  </Stage>
);

/* ---------- side strip ---------- */

const Strip = styled.nav`
  display: flex;
  flex-direction: column;
  flex: none;
  width: 52px;
  border: solid ${C.line};
  border-width: 0 1px;
`;

const StripToggle = styled.button`
  display: grid;
  place-items: center;
  height: 47px;
  padding-top: 2px;
`;

const StripTools = styled.div`
  display: grid;
  grid-auto-rows: 51px;
  gap: 15px;
`;

const StripButton = styled.button<{ $on?: boolean }>`
  display: grid;
  place-items: center;
  background: ${(p) => (p.$on ? C.accent : "transparent")};
`;

const ThemeIcon = ({ c }: { c?: string }) => (
  <Icon s={26} c={c} sw={3}>
    <rect x="1.500" y="1.500" width="9" height="9" rx="1" />
    <rect x="1.500" y="15.500" width="9" height="9" rx="1" />
    <rect x="15.500" y="15.500" width="9" height="9" rx="1" />
    <path d="M19 1.500H15.500V10.500H24.500V7M22 2H25" />
  </Icon>
);

const SideStrip = () => (
  <Strip>
    <StripToggle aria-label="收起面板"><Icon s={27} c={C.mid} sw={2}><path d="M1 1L12 13.500L1 26M15 1L26 13.500L15 26" /></Icon></StripToggle>
    <StripTools>
      <StripButton aria-label="填充"><Bucket s={28} /></StripButton>
      <StripButton $on aria-label="主题"><ThemeIcon c="#fff" /></StripButton>
      <StripButton aria-label="图片">
        <Icon s={24} w={27} sw={2.6}><rect x="1.500" y="1.500" width="24" height="21" /><path className="mf" d="M3 21V17L9 12L13 16L18 11.500L24 17V21z" /><path className="mf" d="M6 6H9V9H6z" /></Icon>
      </StripButton>
      <StripButton aria-label="图层"><LayersIcon /></StripButton>
      <StripButton aria-label="页面">
        <Icon s={27} w={24} sw={3}><path d="M1.500 1.500H17L22.500 7V25.500H1.500z" /><path className="f" d="M15 1L23 8H15z" /><path d="M5 12.500H8M10 12.500H19M5 18.500H8M10 18.500H19" strokeWidth="2.500" /></Icon>
      </StripButton>
      <StripButton aria-label="图表">
        <Icon s={27} sw={2.6}><path d="M1.500 1V25.500H27" /><path d="M7 17L15 7L22 17" strokeWidth="1.500" /><circle className="f" cx="15" cy="8" r="3.200" /><circle className="f" cx="7.500" cy="17" r="3.200" /><circle className="f" cx="22.500" cy="17" r="3.200" /></Icon>
      </StripButton>
      <StripButton aria-label="表格">
        <Icon s={26} sw={2.8}><rect x="1.500" y="1.500" width="23" height="23" rx="1.500" /><path d="M1 9.500H25M1 16.500H25M9 9.500V25M17 9.500V25" strokeWidth="2.500" /></Icon>
      </StripButton>
      <StripButton aria-label="平面图">
        <Icon s={25} w={26} sw={3}><path d="M16 1.500H1.500V23.500H24.500V6H16V1.500M9.500 2V10H1.500M16 5V10M1.500 16H9M9.500 14V17M17 24V16H13" /></Icon>
      </StripButton>
      <StripButton aria-label="甘特图">
        <Icon s={24} w={27}><path className="f" d="M0 0H27V5H24L23 3.500H4L3 5H0zM3 9H15V13H3zM12 20H26V24H12z" /><path d="M15 11H21.500V20" strokeWidth="1.500" /></Icon>
      </StripButton>
      <StripButton aria-label="思维导图">
        <Icon s={23} w={27}><path className="f" d="M0 0H7V6H0zM20 0H27V6H20zM0 17H7V23H0zM20 17H27V23H20zM9 9H18V14H9z" /><path d="M7 3C12 3 11 8 11 11.500S12 20 7 20M20 3C15 3 16 8 16 11.500S15 20 20 20" strokeWidth="1.800" /></Icon>
      </StripButton>
    </StripTools>
  </Strip>
);

/* ---------- theme panel ---------- */

const ThemePanel = styled.aside`
  display: flex;
  flex-direction: column;
  flex: none;
  width: 423px;
`;

const ThemeHead = styled.h2`
  display: grid;
  place-items: center;
  flex: none;
  height: 47px;
  padding-top: 3px;
  background: ${C.head};
  color: #000;
  font-size: 20px;
  font-weight: 700;
`;

const ThemeBody = styled(ScrollBody)`
  padding: 23px 0 0 22px;
`;

const ThemeTop = styled.div`
  display: flex;
  gap: 46px;
`;

const Preview = styled.div`
  width: 195px;
  height: 192px;
  border: 1px solid #dcdcdc;
  background: ${C.paper};
`;

const OptionList = styled.div`
  display: grid;
  grid-template-rows: repeat(4, 48px);
  color: #222;
`;

const Option = styled.button`
  display: grid;
  grid-template-columns: 34px auto;
  column-gap: 15px;
  place-items: center start;
  text-align: left;
`;

const ThemeTabs = styled.div`
  display: grid;
  grid-template-columns: 94px repeat(3, 93px);
  margin: 23px 0 29px;
`;

const ThemeTab = styled.button<{ $on?: boolean }>`
  display: grid;
  grid-template-rows: 46px 40px;
  place-items: center;
  height: 90px;
  padding-bottom: 4px;
  background: ${(p) => (p.$on ? C.head : "transparent")};
  color: #000;
`;

const ThemeGrid = styled.div`
  display: grid;
  grid-template-columns: 180px 180px;
  grid-auto-rows: 147px;
  gap: 7px;
`;

const ThemeCard = styled.button`
  border: 1px solid #dcdcdc;
  background: #fff;
`;

const AaMark = () => (
  <Icon s={24} w={33} sw={3}><path d="M1 21L10 2L19 21M5 15H15" strokeWidth="3.200" /><path d="M22 11Q30 7 30 13V21M30 15H26q-4 0-4 3q0 3 3.500 3q4 0 4.500-4" /></Icon>
);
const ElbowMark = () => (
  <Icon s={24} w={31}><circle className="f" cx="3" cy="3.500" r="3" /><path className="m" d="M7 3.500H15V20H23" strokeWidth="2.200" /><path className="f" d="M25 16L31 20L25 24z" /></Icon>
);

type Look = {
  d: [string, string, number];
  r: [string, string, number];
  p: [string, string, number];
  a: [string, number];
  e: [string, number];
  slim?: boolean;
};

const Mini = ({ look }: { look: Look }) => {
  const { d, r, p, a, e, slim } = look;
  const w = slim ? 3 : 3 + a[1];
  const w2 = slim ? 3 : 3 + e[1];
  const h = slim ? 11 : 6 + a[1];
  const h2 = slim ? 11 : 6 + e[1];
  return (
    <svg width="178" height="145" viewBox="1 1 178 145" aria-hidden="true" display="block">
      <path d={roundPoly([[25, 41], [56, 22], [87, 41], [56, 60]], 6)} fill={d[0]} stroke={d[1]} strokeWidth={d[2]} />
      <rect x="31.500" y="96" width="49" height="31" rx="5" fill={r[0]} stroke={r[1]} strokeWidth={r[2]} />
      <path d={roundPoly([[116, 51], [166, 51], [155, 82], [105, 82]], 4)} fill={p[0]} stroke={p[1]} strokeWidth={p[2]} />
      <path d={`M56 60V${95 - h / 2}`} stroke={a[0]} strokeWidth={a[1]} />
      <path d={`M${56 - w} ${96 - h}L56 96L${56 + w} ${96 - h}z`} fill={a[0]} />
      <path d={`M81 112H135.500V${83 + h2 / 2}`} fill="none" stroke={e[0]} strokeWidth={e[1]} strokeLinejoin="round" />
      <path d={`M${135.5 - w2} ${82 + h2}L135.500 82L${135.5 + w2} ${82 + h2}z`} fill={e[0]} />
    </svg>
  );
};

const looks: Look[] = [
  { d: ["#fff", "#0b4560", 1.5], r: ["#fff", "#333", 1.5], p: ["#fff", "#cfc6b8", 1], a: ["#0b4560", 1.5], e: ["#333", 1.5] },
  { d: ["#6a82a2", "#6a82a2", 1], r: ["#86abbd", "#86abbd", 1], p: ["#d9b986", "#d9b986", 1], a: ["#475a72", 1.5], e: ["#57778a", 1.5] },
  { d: ["#f0eefa", "#8c86c8", 3], r: ["#eaeef8", "#6c86c4", 3], p: ["#edf2fa", "#a9c0dc", 1], a: ["#6e649c", 3], e: ["#50649a", 3] },
  { d: ["#9dcbba", "#6c9080", 1.5], r: ["#99b799", "#6c8c6c", 1.5], p: ["#abccd6", "#abccd6", 1], a: ["#668878", 1.5], e: ["#62805f", 1.5], slim: true },
  { d: ["#fff", "#5878b4", 3], r: ["#fff", "#5878b4", 3], p: ["#fff", "#e0b4bc", 1], a: ["#5878b4", 3], e: ["#5878b4", 3] },
  { d: ["#2a98d0", "#2a98d0", 1], r: ["#2a98d0", "#2a98d0", 1], p: ["#eba42a", "#eba42a", 1], a: ["#2a98d0", 1.5], e: ["#2a98d0", 1.5] },
];

const PreviewDrawing = () => (
  <svg width="193" height="190" viewBox="1 1 193 190" display="block" fontFamily='"DejaVu Sans Mono", monospace' fontWeight="400" fontSize="18" textAnchor="middle" fill="#fff" role="img" aria-label="主题预览">
    <path d={roundPoly([[18, 57], [56, 34], [94, 57], [56, 80]], 8)} fill="#ea6060" stroke="#cc3f44" strokeWidth="1.500" />
    <text x="56" y="63">text</text>
    <path d="M56 80V114" stroke="#a02a2e" strokeWidth="4" />
    <path d="M48 112L56 114L64 112L56 124z" fill="#a02a2e" />
    <path d="M86 143.500H153.500V117" fill="none" stroke="#4c434c" strokeWidth="4" strokeLinejoin="round" />
    <path d="M146 119L153.500 117L161 119L153.500 106z" fill="#4c434c" />
    <path d={roundPoly([[132, 68], [191, 68], [176, 106], [117, 106]], 8)} fill="#7d706f" />
    <text x="153" y="94">text</text>
    <rect x="26" y="125" width="60" height="37" rx="6" fill="#857a84" stroke="#6a5f69" strokeWidth="1.500" />
    <text x="56" y="149">text</text>
    <rect x="97" y="136" width="53" height="23" fill="#fff" />
    <text x="124" y="150" fontSize="22" fill="#444">text</text>
  </svg>
);

const Themes = () => (
  <ThemePanel>
    <ThemeHead>主题</ThemeHead>
    <ScrollArea>
      <ThemeBody>
        <ThemeTop>
          <Preview><PreviewDrawing /></Preview>
          <OptionList>
            <Option>
              <Icon s={25} w={31}>
                <rect x="1" y="0" width="31" height="25" fill="#fff" stroke="none" />
                {["#565e60", "#558c5c", "#4f8fdc", "#b43c60", "#f47a2c", "#7c5c8c"].map((c, i) => (
                  <rect key={c} x={3.5 + (i % 3) * 9} y={2.5 + Math.floor(i / 3) * 11} width="7.500" height="9" fill={c} stroke="none" />
                ))}
              </Icon>
              流年
            </Option>
            <Option><AaMark />微软雅黑</Option>
            <Option><ElbowMark />加粗箭头</Option>
            <Option>
              <Icon s={24} w={30} sw={3}><path d="M4.500 1.500H22L26.500 6V22.500H4.500zM12 2V9H19V2" /></Icon>
              保存主题
            </Option>
          </OptionList>
        </ThemeTop>
        <ThemeTabs>
          <ThemeTab $on><ThemeIcon /><span>主题</span></ThemeTab>
          <ThemeTab>
            <Icon s={26} w={30} sw={2.6}><rect x="1.500" y="1.500" width="27" height="23" /><path className="mf" d="M4 5H10V12H4zM12 5H18V12H12zM20 5H26V12H20zM4 14H10V21H4zM12 14H18V21H12zM20 14H26V21H20z" /></Icon>
            <span>颜色</span>
          </ThemeTab>
          <ThemeTab><ElbowMark /><span>连接线</span></ThemeTab>
          <ThemeTab><AaMark /><span>文本</span></ThemeTab>
        </ThemeTabs>
        <ThemeGrid>
          {looks.map((l, i) => <ThemeCard key={i} aria-label={`主题 ${i + 1}`}><Mini look={l} /></ThemeCard>)}
        </ThemeGrid>
      </ThemeBody>
      <Track><Thumb $share={45} /></Track>
    </ScrollArea>
  </ThemePanel>
);

/* ---------- status bar ---------- */

const Status = styled.footer`
  display: flex;
  align-items: center;
  flex: none;
  height: 46px;
  padding-top: 1px;
  border-top: 1px solid ${C.soft};
  color: #000;
`;

const PageSelect = styled.select`
  width: 143px;
  height: 36px;
  margin-left: 38px;
  padding: 0;
  border: 0;
  background: transparent;
  font-weight: 400;
  appearance: none;
`;

const PageTab = styled.button`
  height: 36px;
  margin-left: 5px;
  padding: 0 29px 0 28px;
  border-left: 1px solid ${C.line};
  font-weight: 700;
`;

const StatusRight = styled.div`
  display: flex;
  align-items: center;
  margin-left: auto;
  padding-right: 42px;
`;

const Zoom = styled.input`
  width: 123px;
  height: 20px;
  margin: 0;
  background: transparent;
  appearance: none;
  &::-webkit-slider-runnable-track {
    height: 5px;
    border-radius: 3px;
    background: linear-gradient(90deg, #c4c4c4 12%, #e0e0e0 12%);
  }
  &::-webkit-slider-thumb {
    appearance: none;
    width: 18px;
    height: 18px;
    margin-top: -7px;
    border: 3px solid #bdbdbd;
    border-radius: 50%;
    background: #fff;
  }
`;

const ZoomValue = styled.span`
  width: 54px;
  padding-left: 13px;
  font-weight: 400;
`;

const StatusBar = () => (
  <Status>
    <Slot $w={34} $gap={25} aria-label="页面视图">
      <Icon s={18} w={33} sw={3}><rect x="7.500" y="1.500" width="18" height="15" /><path className="m" d="M1.500 0V18M31.500 0V18" strokeWidth="2" /></Icon>
    </Slot>
    <PageSelect aria-label="页面"><option>Page-1</option></PageSelect>
    <Icon s={6} w={10} c={C.mid}><path className="f" d="M0 0H10L5 6z" /></Icon>
    <PageTab>Page-1</PageTab>
    <Slot $w={40} aria-label="添加页面"><Icon s={15} sw={2.5}><path d="M7.500 0V15M0 7.500H15" /></Icon></Slot>
    <StatusRight>
      <Slot $w={40} aria-label="播放"><Icon s={26} sw={2.5}><circle cx="13" cy="13" r="11.500" /><path className="mf" d="M9 7L19 13L9 19z" /></Icon></Slot>
      <Slot $w={34} aria-label="缩小"><Icon s={15} sw={2.6}><path d="M0 7.500H15" /></Icon></Slot>
      <Zoom type="range" aria-label="缩放" min="0" max="100" defaultValue="10" />
      <Slot $w={34} aria-label="放大"><Icon s={15} sw={2.6}><path d="M7.500 0V15M0 7.500H15" /></Icon></Slot>
      <ZoomValue>49%</ZoomValue>
      <Slot $w={30} aria-label="缩放选项"><Caret c="#999" /></Slot>
      <Slot $w={42} $gap={5} aria-label="全屏"><Icon s={23} sw={3}><path d="M1.500 8V1.500H8M15 1.500H21.500V8M21.500 15V21.500H15M8 21.500H1.500V15" /></Icon></Slot>
      <Slot $w={28} aria-label="适应页面"><Icon s={24} sw={2.6}><rect x="1.500" y="1.500" width="21" height="21" /><path d="M6 12H18M9 8.500L5.500 12L9 15.500M15 8.500L18.500 12L15 15.500" strokeWidth="2" /></Icon></Slot>
    </StatusRight>
  </Status>
);

export default function App() {
  return (
    <Window>
      <GlobalStyle />
      <Head />
      <Toolbar />
      <Body>
        <SymbolLibrary />
        <Document />
        <SideStrip />
        <Themes />
      </Body>
      <StatusBar />
    </Window>
  );
}
